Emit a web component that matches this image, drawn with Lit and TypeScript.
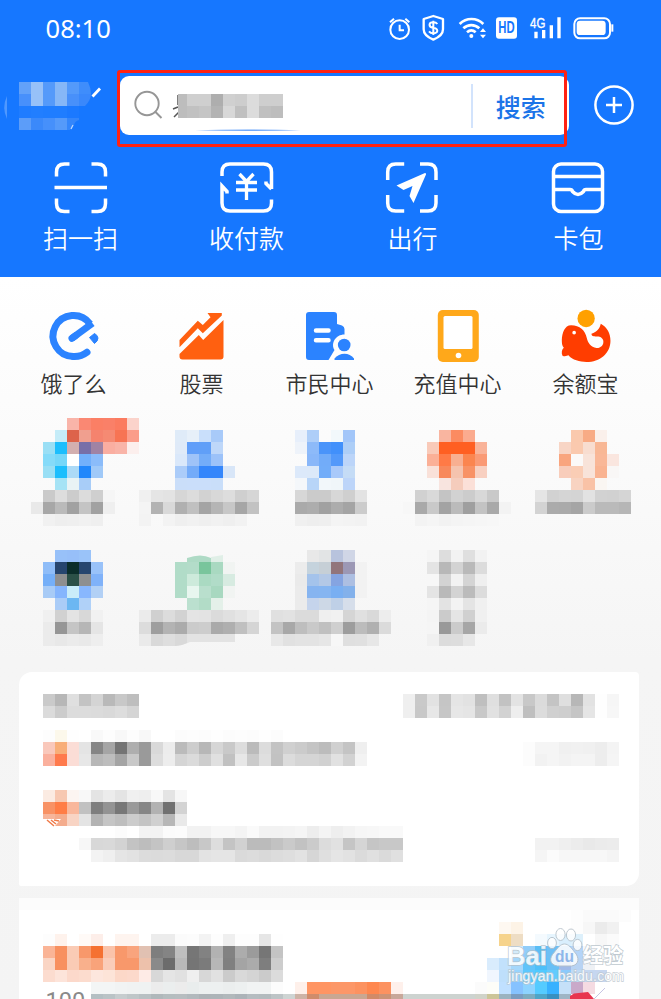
import { LitElement, html, svg, css } from "lit";
import { customElement, property } from "lit/decorators.js";

const CELL = 12;

/* One string per row; "." is empty, two digits are a grey, six a colour. */
@customElement("pixel-block")
class PixelBlock extends LitElement {
  @property({ attribute: false }) rows: string[] = [];
  @property({ type: Number }) cols = 0;

  static styles = css`
    :host { display: block; flex: none; }
    svg { display: block; overflow: visible; }
  `;

  render() {
    const grid = this.rows.map((r) => r.trim().split(/\s+/));
    const cols = this.cols || Math.max(...grid.map((r) => r.length));
    return html`<svg width=${cols * CELL} height=${grid.length * CELL} shape-rendering="crispEdges">
      ${grid.map((row, y) =>
        row.map((c, x) =>
          c === "."
            ? null
            : svg`<rect x=${x * CELL} y=${y * CELL} width=${CELL} height=${CELL} fill=${"#" + (c.length === 2 ? c + c + c : c)}></rect>`
        )
      )}
    </svg>`;
  }
}

const px = (rows: string[], cols = 0) => html`<pixel-block .rows=${rows} .cols=${cols}></pixel-block>`;

const status = (x: number, w: number, body: unknown) =>
  html`<svg width=${w / 3} height="28" viewBox="${x} 42 ${w} 84" fill="none" stroke="#fff">${body}</svg>`;

const statusIcons = [
  status(172, 86, svg`<circle cx="210" cy="89" r="28" stroke-width="6"></circle>
    <path d="M210 74v17h13" stroke-width="6"></path>
    <path d="M181 67l12-11M239 67l-12-11" stroke-width="6"></path>`),
  status(258, 104, svg`<path d="M310 48l29 9v31c0 16-14 25-29 31c-15-6-29-15-29-31V57z" stroke-width="7" stroke-linejoin="round"></path>
    <path d="M322 72c-3-4-7-5-12-5c-15 0-15 14-1 16c17 2 17 17 1 17c-6 0-10-2-13-6M310 62v43" stroke-width="6"></path>`),
  status(362, 122, svg`<path d="M388 72c20-20 51-20 71 0M399 85c14-13 34-13 48 0M410 97c8-7 18-7 26 0" stroke-width="8"></path>
    <circle cx="423" cy="108" r="6" fill="#fff" stroke="none"></circle>
    <path d="M449 96l9-11l9 11zM449 104l9 11l9-11z" fill="#fff" stroke="none"></path>`),
  status(484, 94, svg`<rect x="499" y="52" width="63" height="64" rx="9" fill="#fff" stroke="none"></rect>
    <text class="hd" x="530.5" y="100" text-anchor="middle" textLength="49" lengthAdjust="spacingAndGlyphs">HD</text>`),
  status(578, 132, svg`<text class="g4" x="599" y="84" textLength="46" lengthAdjust="spacingAndGlyphs">4G</text>
    <path d="M617 95v20M640 90v25M663 76v39M686 52v63" stroke-width="10"></path>`),
  status(710, 150, svg`<rect x="732" y="55" width="107" height="60" rx="17" stroke-width="6"></rect>
    <rect x="739" y="62" width="87" height="43" rx="10" fill="#fff" stroke="none"></rect>
    <path d="M846 73v22" stroke-width="6"></path>`),
];

const quick = [
  { label: "扫一扫", icon: svg`<path d="M56.5 176.500V172q0-8 8-8H69.500M91.500 164h6q8 0 8 8v4.500M105.500 198.500v5q0 8-8 8h-6M69.500 211.500h-5q-8 0-8-8v-5M54.500 187.500h52.500"></path>` },
  { label: "收付款", icon: svg`<path d="M222 176v-4q0-8 8-8h33.500q8 0 8 8v17M271.500 189l-5.500-5.500v-2M271.500 199.500v3.500q0 8-8 8h-33.500q-8 0-8-8v-17l5 5.500v2"></path>
    <path d="M239.500 174l7 7.500l7-7.500M246.500 181.500V200M236 182.500h21M236 190h21" stroke-width="3.300"></path>` },
  { label: "出行", icon: svg`<path d="M387.700 180v-8q0-8 8-8h8.500M420 164h8q8 0 8 8v8M436 195v8q0 8-8 8h-8M404.200 211h-8.500q-8 0-8-8v-8"></path>
    <path d="M396.500 185.500L425 173q1.500 0 1 1.500L413.500 203l-4-7l3-10l-9 4z" fill="#fff" stroke="none"></path>` },
  { label: "卡包", icon: svg`<rect x="553.500" y="164" width="49" height="47.500" rx="7.500"></rect>
    <path d="M553.500 176.500h49M553.500 189.500h16.500q2 0 2.500 2q5.500 6 11 0q.5-2 2.500-2h16.500"></path>` },
];

const apps = [
  { label: "饿了么", icon: svg`<g fill="none" stroke="#2b83ff" stroke-width="7">
      <path d="M89.500 323.800A20.500 20.500 0 1 0 73 356.500"></path>
      <path d="M73 356.500A20.500 20.500 0 0 0 86.500 352.300" stroke-linecap="round"></path>
      <path d="M71.500 338.300L75 335.700" stroke-linecap="round"></path><path d="M71.500 338.300L92 323.300"></path></g>
    <path d="M89 337.500l5-4q3 1.500 3.500 4.500q0 3-3.500 5.500z" fill="#2b83ff" stroke="#2b83ff" stroke-linejoin="round"></path>` },
  { label: "股票", icon: svg`<g fill="#ff6010"><path d="M179 340l18.300-19.300l5 4.300l7.700-7.700l-3-4.300h14.300v2.500l-19 17.800l-5-5l-18.300 19z"></path>
    <path d="M179 355.700l0-1.700l19.300-19l4.400 5L223 320v36.500q0 3-3 3h-38q-3 0-3-3z"></path></g>` },
  { label: "市民中心", icon: svg`<path d="M308.500 312h25q3 0 3 3v9l5 1.500q2.500 1 2.500 3.500v5.500c-9 0-14 9-10 15.500l-6 10h-19.500q-3 0-3-3v-42q0-3 3-3z" fill="#2b83ff"></path>
    <path d="M315.500 330.500h12.500M315.500 340.200h12.500" stroke="#fff" stroke-width="4.500" stroke-linecap="round"></path>
    <circle cx="343.700" cy="345" r="6.300" fill="#2b83ff"></circle>
    <path d="M334 360v-1.500c5-6.500 15-6.500 19.500 0v1.500z" fill="#2b83ff"></path>` },
  { label: "充值中心", icon: svg`<rect x="437.300" y="310" width="41" height="52" rx="5" fill="#ffa81a"></rect>
    <rect x="443" y="316" width="29" height="33" rx="1.500" fill="#fff"></rect><circle cx="458" cy="355.500" r="2.800" fill="#fff"></circle>` },
  { label: "余额宝", icon: svg`<g transform="translate(330 290) scale(.3333)"><circle cx="767" cy="85.500" r="26" fill="#ffa000"></circle>
    <path d="M722 106C702 106 695 130 694 150c0 10 1 18 6 23c-6 5-8 15-4 24c6 3 14 1 18-1c11 14 34 20 54 20c40 0 72-26 72-64c0-22-10-41-29-51c-3 13-11 25-28 30c0 5 2 7 7 8c10 1 22-3 28 11c4 16-9 25-20 24c-17-2-26-16-29-30C764 121 748 106 722 106z" fill="#ff3d00"></path>
    <circle cx="731" cy="128" r="5.500" fill="#fff"></circle></g>` },
];

const rowA = [
  [
    ". . . . . f9b4a9 fa8873 fb7f65 fa8068 fb7b60 fbd3cb",
    ". . . . c5ecf8 dd634b f09f8f f5836e f58a73 f77454 fb9d8a",
    ". . . 9adff5 1cbefd d3afb0 776fa8 a083a4 faaea1 f9b4a8 fcefed",
    ". . . 85dbf9 76d7f9 ff 73b0fb 8bbcfa",
    ". . . 99dff5 1cbefd acdaf7 2187fb a0c9f8",
    ". . . . a6e3f5 e9f3f5 a8cdf8",
    ". . . ca dd cc dc cf f6",
    ". . e9 a7 ba a1 c4 a1 ef",
    ". . . f1 ee ef f1 ef",
  ],
  [
    ".",
    ". . . dfebf8 e7f0f9 c9dffb a8caf9",
    ". . . dfeaf8 609ef9 609ff8 bed7f9",
    ". . . dae8fa 9fc3f8 74adf9 9cc2f9",
    ". . . abccf9 73abf9 3486fb 3486fb d8e6f8",
    ". . . cadef9 cadefa cadefa c9def9",
    "f0 e5 e3 d6 dc d2 d8 dd cf d6",
    "f4 b3 d9 b0 c0 a4 b5 c7 a6 c2",
    "f3 . f3 ef f1 ef f1 ef f2 .",
  ],
  [
    ".",
    ". . e7effb aecef8 . f2f8fb a2c6f9",
    ". . eef3fa 8dbaf9 4a94fa 4190fb adcef7",
    ". . . 89b7f9 72acf9 5399fa bcd5f9",
    ". . dce9fa dce9f9 72adf9 a8c9fa c5dcf6",
    ". . f4f7fa b8d5f8 f2f7fa f0f6f9 bdd5f9",
    ". . d7 cb cb d7 cf e3",
    ". . aa ad a1 ac a4 cc",
    ". . f0 ee ef f4 f3 f2",
  ],
  [
    ".",
    ". . . f9b5a0 fb8b61 fbab8f",
    ". . f9cab9 ff5f22 ff5f22 ff5f22 f9b399",
    ". . fbb097 ff7a46 f8af91 fb854f fa9a75",
    ". . f9e1d9 f8885b f5c3ae f89266 f8d0c1",
    ". . . f8e4df f5ccbc fbe0d8",
    ". d1 d9 c4 d2 cc d8 c9",
    "f7 a9 c9 a3 bb 9f c3 a9 f3",
    ". f3 f5 f2 f4 f5 f6 f7",
  ],
  [
    ".",
    ". . . fac9ad f8ab85 faf0eb",
    ". . f8d5c5 fac9ae f8ddd0 f8b795",
    ". . f9a57e fbf9f8 f8e3d9 f9b797 fae6df",
    ". . f8cdbb facdb5 f8e3d9 f9b391 f9f7f6",
    ". . . f8d3c1 f9c2a6 faf6f2",
    "e5 d2 d5 d4 e2 d2 d1 d5",
    "d3 ab aa a5 cb ba ba b6",
    ".",
  ],
];

const rowB = [
  [
    ". . . . 98c1f9 97bff9 9ac3f9",
    ". . . 8fbdf8 26456e 0b2d2a 26456e 99c2f9",
    ". . . 75aff8 8e8f90 2b5047 8e8f90 80b2f9",
    ". . . a8cbf6 85b5fd c9ecf9 88b7fe b2d0f5",
    ". . . . aaccf7 6cb7f2 b0d1f8",
    ". . . f0 d1 e3 d8 f1",
    ". . . eb 96 c5 b6 e5",
    ". . . eb e8 eb e9 ee",
  ],
  [
    ".",
    ". . . b1dcc8 b3dcc9 79c59c a9d9c1 f1f4f2",
    ". . . b1dcc8 cdeadb aadac2 b1dcc8 d7ebe1",
    ". . . b1dcc8 e8f6ef b9dfcd a8d8c0 f1f4f2",
    ". . . . bbe0cf b2dcc7 e4f0e9",
    "eb d0 dc d2 e4 e3 db e0 e5 ec",
    "dc 9e b3 ab cb cd aa af c0 d5",
    "ea d9 de . . . . . . .",
  ],
  [
    ". . . e8 e2e4e5 b8c3dd d0d6e6",
    ". . ec c5d3dd c6cfd6 92757b 9c98b5 f2",
    ". . ea a4c3eb b3c8e6 85a4e1 adbfe2 f2",
    ". . eb 86b4f0 85b5f1 79aff2 83b1eb f2",
    ". . eb c5d4ec cdd8e6 bfd0e7 d6deea",
    "e0 e2 db db ef f1 d5 e0 d9 ed",
    "c3 a8 be c9 c0 cf 9d bc b0 db",
    "e8 e1 e3 e3 e6 f7 df e0 e7",
  ],
  [
    ". . f5 dd f2 df f2",
    ". . e4 b8 d3 b9 dc",
    ". . f7 d3 f2 d4 ef",
    ". . e4 b9 d3 bb dc",
    ". . f5 e3 f3 e4 f0",
    ". . f4 cb e5 d0 f0",
    ". . f5 99 cb a6 eb",
    ". . f0 dc dd e7",
  ],
];

const card = {
  title: ["ca b7 df c3 d4 b9 c8 be", "db cc dc dc db d9 dd d5"],
  more: [
    "ef c9 e2 c5 e5 e2 bf df c2 e3 c8 db c4 df b7 e2 fe f6",
    "ef c8 e7 c6 e7 e5 c8 e1 d2 ee bf dc d0 ce c5 e5 fe f7",
  ],
  first: [
    "fd fcf8eb fe . f9 fd f8 fd f8 . . fc fd fc fe fc fd fc fe fc",
    "f9c8bb f8ae78 fbddd6 e4 86 a5 74 ae 9a d9 ec bb cd b7 d6 c9 dd bb dc c3 d0 cb c4 bc d0 c4 ef",
    "fab09d ff7a4c fbddd6 e7 b7 bd a4 c8 9a dd ed d5 db cd e0 c1 e7 cb df c2 dc d5 d5 d1 e1 d2 f3",
  ],
  firstTime: ["fc f5 f5 f0 f1 f0 ed f4", "fc f2 f5 f2 f4 f4 ed f5"],
  second: [
    "fbebe2 f7c8b1 fcf5f1 f8 e4 ec e4 f0 ee f8 e4 f7",
    "f89265 ff7d46 f9b79b c1 7e 93 77 9a 86 b2 71 d3",
    "f7b59a f4ac8d f8d4c4 e4 b3 c5 be cc c4 d0 b7 e9",
  ],
  detail: [
    ". . . . . . fc . f3 f3 fb fc f2 f2 f7 f7 f4 fa f2 f2 f3 f5 ed f4 ee f2 f6 f7 f9 f9",
    ". . . f7 d8 d9 d3 c3 bd c4 cf c6 bd c8 dd c4 d1 bb bb c2 ca c2 cb dc e1 c5 d5 c5 c8 c8",
    ". . . . f3 ef e5 e2 dc db dc d8 d8 e3 e5 e5 da dc d9 dc de e2 d6 df e5 e2 db e0 da e0",
  ],
  detailTime: ["f2 f2 ef ec e9 eb ec", "f5 fb f7 f7 f7 f7 f4"],
};

const promo = {
  title: [
    "fd fef2ec . fffaf7 fdeee9 . fef4ef fef4ef . ec ec fb fc f3 fd ef fd fd e6 fe",
    "fab496 f8905f facbb5 f8986b f57131 fac3aa f8986b f9a47d e1c1b2 7e 84 bf 76 82 b2 82 ac 9b 76 c4",
    "fad5c4 f8905f facbb5 f9b08c f9a37a facdb9 f8986b f8986b edc1ab 8a 6c b9 75 7b b7 80 a4 ab 7e cd",
    "fcdccf fde4da fcd9cb fcdcce fde6dd fde4d8 fcd8c8 fcd9cb feebe6 d8 e5 e1 ef d7 e1 cb d9 d4 cb dc",
  ],
  band: [
    ". . . . f3f5f5 f3f5f5 f1f3f3 f0f2f2 eff2f2 ec ebeeee ec e9eded edf0f0 edf0f0 ebeeee edf0f0 f1f3f3 f1f3f3 fc . fef0ea ff9563 ff9563 fc9768 fc9768 fc9260 fe874f fc9260 fef0eb",
    ". . . . b4bfc3 bac3c6 c6ccce bfc6c8 b8c0c3 b0b8bb b5bdbf b7bdc0 b2b9bd adb3b7 adb4b8 b1b8bb acb3b8 b5bcc0 b3bbbe bdc4c6 ced4d3 cdb3a6 cf8c6c c9a792 c9a792 c9a792 c9a792 d18a68 cc9376 c8a89a cdd3d0 cdd3d0 cdd3d0 cdd3d0 cdd3d0 cdd3d0",
  ],
  art: [
    ". . . . . . . . fd fa fa fa fc",
    ". . fef8f1 fdf3e6 . . . . fd f7 eb f1",
    ". . f6d38c eeddc4 . f4fafe e6f5fe d9effd ddf0fb . f7 fb",
    ". . . d4ebfa 91cdf9 59bdf5 6dbff5 98cbf8 b4d4f8 f4f7fa",
    ". d9ecfd c2e1fc a5d7fb 60c3f9 4dbff9 68c0f6 a0b9e8 b8d3f3 eef1f5",
    ". f0f6fe bedffb 98d4fd 5cc8fe 50caff 63cbfd 8bcafb bfdaf5 c5d7f0 c6d6ef",
    "fb fdfdf8 c0e0ff 86c2ff 8dd3ff 55cbff 38b1ff c5e0f8 c9a9c9 f5dbe2",
    "d0d3c9 ccc598 9bb3c0 7a9cc0 7cacc0 4ea5c8 3990c0 9fb5c5 . .",
  ],
};

@customElement("app-root")
class AppRoot extends LitElement {
  static styles = css`
    :host {
      display: block; position: relative; width: 661px; height: 999px; overflow: hidden;
      font-family: "Noto Sans CJK SC", "Noto Sans", sans-serif;
      background: linear-gradient(#fff 277px, #fcfcfc 400px, #f5f5f5 660px, #f4f4f4);
    }
    * { box-sizing: border-box; }
    svg { display: block; flex: none; }
    .header { height: 277px; background: #1677ff; color: #fff; }
    .status { height: 70px; display: flex; justify-content: space-between; padding: 14px 44.300px 0 45.600px; }
    .time { font: 25.500px/28px "Noto Sans", sans-serif; }
    .icons { display: flex; }
    .hd { font: 700 47px "Liberation Sans", sans-serif; fill: #1677ff; stroke: none; }
    .g4 { font: 42px "Liberation Sans", sans-serif; fill: #fff; stroke: #fff; stroke-width: 1px; }
    .search-row { display: flex; height: 77px; }
    .place { width: 117px; }
    .frame { position: relative; width: 450px; height: 77px; padding: 6px 0 0 3px; }
    .frame::after { content: ""; position: absolute; inset: 0; border: 3px solid #ff2213; border-radius: 3px; }
    .search { display: flex; align-items: center; width: 448.500px; height: 59px; border-radius: 9px; background: #fff; }
    .divider { width: 2px; height: 44px; background: #d2e3fc; }
    .go { width: 95.500px; text-align: center; font-weight: 500; font-size: 25px; line-height: 36px; color: #1b74e8; }
    .plus { margin: 14px 0 0 27px; }
    .quick { display: grid; grid-template-columns: repeat(4, 166px); margin: 12px 0 0 -2.500px; }
    .q { display: flex; flex-direction: column; align-items: center; font-size: 25px; line-height: 36px; font-weight: 350; }
    .apps { display: grid; grid-template-columns: repeat(5, 128px); padding: 31px 0 0 9.500px; height: 141px; }
    .app { display: flex; flex-direction: column; align-items: center; font-size: 22px; line-height: 32px; color: #333; font-weight: 350; }
    .app svg { margin-bottom: 2px; }
    .tiles { display: grid; grid-template-columns: repeat(5, 120px); gap: 12px; padding-left: 7px; }
    .tiles + .tiles { margin-top: 24px; }
    .tile { position: relative; }
    .blob { position: absolute; left: 36px; top: 4px; }
    .curve { position: absolute; left: 36px; top: 84px; }
    .card { position: relative; width: 620px; margin-left: 19px; padding: 22px 20px 0 24px; background: #fff; }
    .feed { height: 214px; margin-top: 26px; border-radius: 13px 4px 13px 2px; }
    .line { display: flex; justify-content: space-between; align-items: flex-end; }
    .line + .line { margin-top: 12px; }
    .line.wide { margin-top: 24px; }
    .line.tight { margin-top: 0; }
    .scratch { position: absolute; left: 24px; top: 147px; }
    .promo { height: 101px; margin-top: 12px; padding-top: 12px; display: flex; overflow: hidden; background: linear-gradient(#fcfcfc 12px, #fff 12px); }
    .copy { position: relative; width: 432px; padding-top: 24px; }
    .hundred { position: absolute; left: 2.500px; top: 78px; font: 23.500px/27px Roboto, sans-serif; color: #8a8a8a; }
    .mark { position: absolute; left: 491px; top: 920px; }
    .mark text { font-family: "Liberation Sans", "Noto Sans CJK SC", sans-serif; fill: #fff; stroke: #b4bfc8; stroke-width: 1.400px; paint-order: stroke; }
    .mark .bai { font-weight: 700; font-size: 26px; }
    .mark .jy { font-weight: 700; font-size: 20px; }
    .mark .url { font-size: 14px; stroke: #bcc6ce; }
    .mark .du { font-weight: 700; font-size: 16px; fill: #8cb4e8; stroke: none; }
  `;

  render() {
    return html`
      <div class="header">
        <div class="status">
          <div class="time">08:10</div>
          <div class="icons">${statusIcons}</div>
        </div>
        <div class="search-row">
          <svg class="place" width="117" height="77" viewBox="0 70 117 77">
            <g shape-rendering="crispEdges">
              ${[
                ["62a1f9", "97c1f8", "559afa", "86b7f7", "549afa", "3f8dfb"],
                ["4890fb", "97c1f8", "559afa", "86b7f7", "4890fa", "3a88fb"],
                ["1f7cff", "217eff", "1f7dff", "1f7dff", "1b79ff"],
                ["5c9df9", "3b89fa", "4690fb", "559afa", "3486fb"],
              ].map((r, y) => r.map((c, x) => svg`<rect x=${19 + x * 12} y=${82 + y * 12} width="12" height="12" fill=${"#" + c}></rect>`))}
            </g>
            <path d="M88 82h4v24h-7q6-6 6-12t-3-12zM79 118v12h-9l4-5q1-4 5-5z" fill="#1677ff"></path>
            <path d="M92.500 96.500l7.500-8" stroke="#fff" stroke-width="2.800"></path>
            <path d="M71 129l2-4" stroke="#bcd8ff" stroke-width="1.200"></path>
            <path d="M7 96q-5.500 11.500 0 23z" fill="#4f98ff"></path>
          </svg>
          <div class="frame">
            <div class="search">
              <svg width="351" height="59" viewBox="120 76 351 59">
                <g fill="none" stroke="#969696" stroke-width="1.900"><circle cx="147" cy="103.500" r="11.700"></circle><path d="M155 111.500l6.500 6.500"></path></g>
                <path d="M178 95v10M173 109l5-2M174 117l6-6" stroke="#555" stroke-width="1.500"></path>
                <g shape-rendering="crispEdges">
                  ${["bd cf cf ae d0 cd dc ce ce", "bd c1 c5 b3 d8 c0 dc c0 bd"].map((r, y) =>
                    r.split(" ").map((c, x) => svg`<rect x=${175 + x * 12 + (x ? 0 : 3)} y=${94 + y * 12} width=${x ? 12 : 9} height="12" fill=${"#" + c + c + c}></rect>`)
                  )}
                </g>
                <path d="M195 130.300q52-1.500 106 0q-52 1.300-106 0z" fill="#6fa8fa"></path>
              </svg>
              <div class="divider"></div>
              <div class="go">搜索</div>
            </div>
          </div>
          <svg class="plus" width="40" height="42" viewBox="594 84 40 42" fill="none" stroke="#fff" stroke-width="2.500">
            <circle cx="614" cy="105" r="18.600"></circle><path d="M606 105h16M614 97v16"></path>
          </svg>
        </div>
        <div class="quick">
          ${quick.map((q, i) => html`<div class="q">
            <svg width="60" height="60" viewBox="${51 + i * 166} 159 60 60" fill="none" stroke="#fff" stroke-width="3.500">${q.icon}</svg>${q.label}</div>`)}
        </div>
      </div>

      <div class="apps">
        ${apps.map((a, i) => html`<div class="app">
          <svg width="56" height="56" viewBox="${45.5 + i * 128} 308 56 56">${a.icon}</svg>${a.label}</div>`)}
      </div>
      <div class="tiles">${rowA.map((t) => html`<div class="tile">${px(t, 10)}</div>`)}</div>
      <div class="tiles">
        ${rowB.map((t, i) => html`<div class="tile">${px(t, 10)}
          ${i === 1
            ? html`<svg class="blob" width="60" height="8"><path d="M12 8V4q14-5 24 0v4z" fill="#aedac5"></path><path d="M36 3l12-2v7H36z" fill="#e0efe7"></path></svg>
              <svg class="curve" width="72" height="12"><path d="M0 0h60v8H15Q6 12 0 12z" fill="#e3e3e3"></path><path d="M0 0h12v9Q6 12 0 12z" fill="#d9d9d9"></path></svg>`
            : null}
        </div>`)}
      </div>

      <div class="card feed">
        <div class="line">${px(card.title)}${px(card.more)}</div>
        <div class="line">${px(card.first)}${px(card.firstTime)}</div>
        <div class="line wide">${px(card.second)}</div>
        <div class="line tight">${px(card.detail)}${px(card.detailTime)}</div>
        <svg class="scratch" width="20" height="8"><path d="M0 0h18l-6 7H0z" fill="#fff"></path>
          <path d="M4 1l7 6M8 1l5 4M11 1l5 1" stroke="#f07a48" stroke-width="1.500"></path></svg>
      </div>

      <div class="card promo">
        <div class="copy">
          ${px(promo.title)}${px(promo.band)}
          <span class="hundred">100</span>
        </div>
        ${px(promo.art)}
      </div>

      <svg class="mark" width="150" height="79" viewBox="491 920 150 79">
        <path d="M570 996l4-2.500l14-1.500l6 7h-24z" fill="#e8354f"></path><path d="M594 999l11-11" stroke="#b9b5dc" stroke-width=".800"></path>
        <g opacity=".85">
          <g fill="#fff" stroke="#b4bfc8" stroke-width="1">
            <path d="M564.500 944c4 0 7 4 10 8c5 5 5 13-3 14h-14c-8-1-9-8-3-14c3-4 6-8 10-8z"></path>
            <ellipse cx="560.500" cy="934.500" rx="4.600" ry="6"></ellipse><ellipse cx="571" cy="935" rx="4.600" ry="6"></ellipse>
            <ellipse cx="552" cy="943" rx="4.400" ry="5.600"></ellipse><ellipse cx="577.500" cy="945" rx="4.400" ry="5.600"></ellipse>
          </g>
          <text class="bai" x="507" y="964.500" textLength="40" lengthAdjust="spacingAndGlyphs">Bai</text>
          <text class="du" x="555" y="962" textLength="19" lengthAdjust="spacingAndGlyphs">du</text>
          <text class="jy" x="583" y="963" textLength="40" lengthAdjust="spacingAndGlyphs">经验</text>
          <text class="url" x="508" y="981" textLength="116" lengthAdjust="spacing">jingyan.baidu.com</text>
        </g>
      </svg>
    `;
  }
}
